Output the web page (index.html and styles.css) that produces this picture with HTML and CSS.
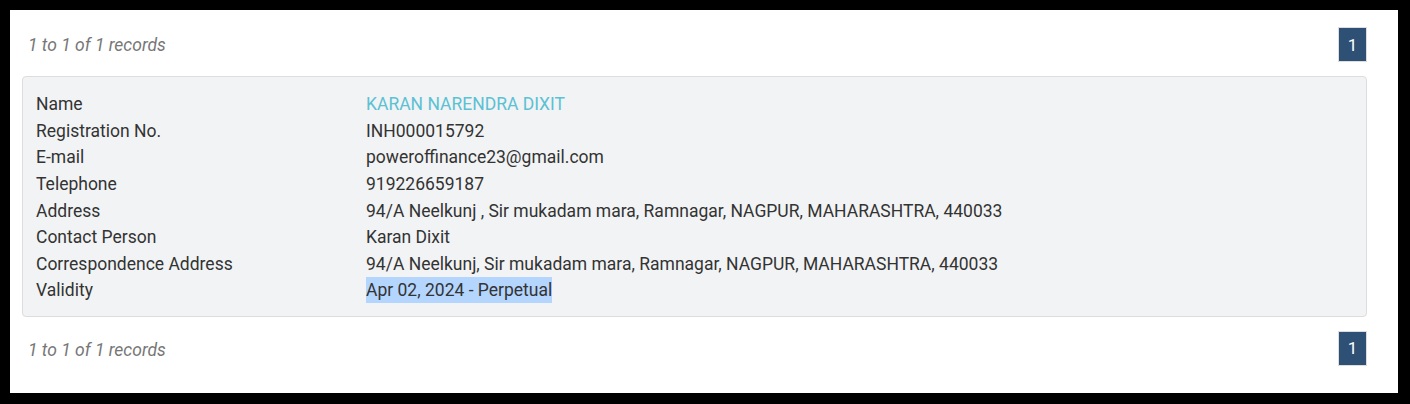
FILE: index.html
```html
<!DOCTYPE html>
<html>
<head>
<meta charset="utf-8">
<link rel="stylesheet" href="styles.css">
</head>
<body>
<div class="frame">
  <div class="pager-row top">
    <span class="records">1 to 1 of 1 records</span>
    <span class="page-btn">1</span>
  </div>
  <div class="card">
    <div class="row"><div class="label">Name</div><div class="value name">KARAN NARENDRA DIXIT</div></div>
    <div class="row"><div class="label">Registration No.</div><div class="value">INH000015792</div></div>
    <div class="row"><div class="label">E-mail</div><div class="value">poweroffinance23@gmail.com</div></div>
    <div class="row"><div class="label">Telephone</div><div class="value">919226659187</div></div>
    <div class="row"><div class="label">Address</div><div class="value">94/A Neelkunj , Sir mukadam mara, Ramnagar, NAGPUR, MAHARASHTRA, 440033</div></div>
    <div class="row"><div class="label">Contact Person</div><div class="value">Karan Dixit</div></div>
    <div class="row"><div class="label">Correspondence Address</div><div class="value">94/A Neelkunj, Sir mukadam mara, Ramnagar, NAGPUR, MAHARASHTRA, 440033</div></div>
    <div class="row"><div class="label">Validity</div><div class="value"><span class="selected">Apr 02, 2024 - Perpetual</span></div></div>
  </div>
  <div class="pager-row bottom">
    <span class="records">1 to 1 of 1 records</span>
    <span class="page-btn">1</span>
  </div>
</div>
</body>
</html>
```
FILE: styles.css
```css
html, body {
  margin: 0;
  padding: 0;
  background: #000;
}
body {
  padding: 10px 12px 11px 10px;
  font-family: Roboto, "Liberation Sans", sans-serif;
  color: #333;
}
.frame {
  background: #fff;
  width: 1388px;
  height: 383px;
  box-sizing: border-box;
  padding: 17px 31px 0 12px;
}
.pager-row {
  display: flex;
  justify-content: space-between;
  align-items: center;
  height: 35px;
}
.pager-row.top .records {
  margin-top: 1px;
}
.pager-row.bottom {
  margin-top: 14px;
}
.pager-row.bottom .records {
  margin-top: 3px;
}
.records {
  padding-left: 6px;
  font-size: 17.5px;
  font-style: italic;
  color: #777;
}
.page-btn {
  box-sizing: border-box;
  width: 29px;
  height: 35px;
  display: flex;
  align-items: center;
  justify-content: center;
  background: #2f5075;
  border: 1px solid #ddd;
  color: #fff;
  font-size: 17px;
}
.card {
  margin-top: 14px;
  background: #f2f3f5;
  border: 1px solid #ddd;
  border-radius: 4px;
  padding: 14px 13px 12px;
}
.row {
  display: flex;
  height: 26.6px;
  align-items: center;
  font-size: 17.5px;
}
.label {
  width: 330px;
  flex: none;
}
.value.name {
  color: #5bc1d3;
}
.selected {
  background: #b4d5fe;
  display: inline-block;
  line-height: 26px;
}
```
